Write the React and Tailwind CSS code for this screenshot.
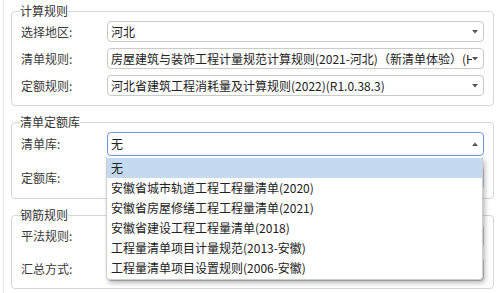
import React from "react";

const font = { fontFamily: '"Noto Sans CJK SC", "Noto Sans", sans-serif' };

const Caret = ({ up }) => (
  <svg width="6" height="4" viewBox="0 0 6 4" className="shrink-0">
    {up ? <path d="M0 4 L3 0.5 L6 4 Z" fill="#555" /> : <path d="M0 0 L6 0 L3 3.5 Z" fill="#555" />}
  </svg>
);

const Select = ({ value, h = "h-[21px]", focused }) => (
  <div
    className={`flex-1 min-w-0 flex items-center ${h} rounded-[4px] border bg-white pl-[3px] pr-[5px] ${
      focused ? "border-[#7396d8]" : "border-[#cacaca]"
    }`}
  >
    <div className="flex-1 min-w-0 overflow-hidden whitespace-nowrap text-[12px] leading-[16px] text-[#222] pr-[1px]">
      {value}
    </div>
    <Caret up={focused} />
  </div>
);

const Row = ({ label, children }) => (
  <div className="flex items-center min-w-0">
    <div className="w-[86px] shrink-0 text-[12px] leading-[16px] text-[#3a3a3a]">{label}</div>
    {children}
  </div>
);

const Group = ({ title, className, children }) => (
  <fieldset className={`min-w-0 rounded-[4px] border border-[#d6d6d6] px-[9px] ${className}`}>
    <legend className="text-[12px] leading-[16px] text-[#333] px-0 -ml-[1px]">{title}</legend>
    {children}
  </fieldset>
);

const items = [
  "无",
  "安徽省城市轨道工程工程量清单(2020)",
  "安徽省房屋修缮工程工程量清单(2021)",
  "安徽省建设工程工程量清单(2018)",
  "工程量清单项目计量规范(2013-安徽)",
  "工程量清单项目设置规则(2006-安徽)",
];

export default function App() {
  return (
    <div className="relative w-[501px] h-[293px] bg-white overflow-hidden" style={font}>
      <div className="h-full pl-[3px]">
        <div className="h-full border-l border-[#e8e8e8] pl-[7px] pr-[7px] pt-[3px]">
          <Group title="计算规则" className="pt-[2px] pb-[9px]">
            <div className="flex flex-col gap-[6px]">
              <Row label="选择地区:">
                <Select value="河北" />
              </Row>
              <Row label="清单规则:">
                <Select value="房屋建筑与装饰工程计量规范计算规则(2021-河北)（新清单体验）(HB)" />
              </Row>
              <Row label="定额规则:">
                <Select value="河北省建筑工程消耗量及计算规则(2022)(R1.0.38.3)" />
              </Row>
            </div>
          </Group>

          <Group title="清单定额库" className="mt-[8px] pt-[2px] pb-[8px]">
            <div className="flex flex-col gap-[10px]">
              <Row label="清单库:">
                <Select value="无" h="h-[24px]" focused />
              </Row>
              <Row label="定额库:">
                <Select value="" h="h-[24px]" />
              </Row>
            </div>
          </Group>

          <Group title="钢筋规则" className="mt-[8px] pt-[1px] pb-[7px]">
            <div className="flex flex-col gap-[9px]">
              <Row label="平法规则:">
                <Select value="" h="h-[24px]" />
              </Row>
              <Row label="汇总方式:">
                <Select value="" h="h-[24px]" />
              </Row>
            </div>
          </Group>
        </div>
      </div>

      <div className="absolute left-[106px] top-[157px] w-[377px] bg-white border border-t-0 border-[#cfcfcf] rounded-b-[4px] shadow-[2px_3px_5px_rgba(0,0,0,0.28)] pt-[1px] pb-[1px]">
        {items.map((t, i) => (
          <div
            key={t}
            className={`h-[20px] flex items-center pl-[4px] text-[12px] leading-[16px] text-[#222] whitespace-nowrap ${
              i === 0 ? "bg-[#c4daf0]" : ""
            }`}
          >
            {t}
          </div>
        ))}
      </div>
    </div>
  );
}
